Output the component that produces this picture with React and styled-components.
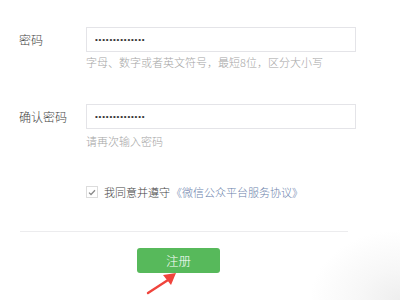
import React from "react";
import styled, { createGlobalStyle } from "styled-components";

const Global = createGlobalStyle`
  html, body { margin: 0; padding: 0; }
  body {
    width: 400px;
    height: 300px;
    overflow: hidden;
    background: radial-gradient(ellipse 90px 70px at 400px 300px, #eeeeee 0%, #f7f7f7 45%, #ffffff 100%);
    font-family: "Liberation Sans", "Noto Sans CJK SC", sans-serif;
  }
`;

const Page = styled.div`
  position: relative;
  width: 400px;
  height: 300px;
  box-sizing: border-box;
  padding: 27px 0 0 19px;
`;

const Field = styled.div`
  display: grid;
  grid-template-columns: 67px 270px;
  margin-top: ${(p) => p.$gap || 0}px;
`;

const Label = styled.label`
  align-self: center;
  font-size: 12px;
  font-weight: 300;
  color: #444;
  font-family: "Noto Sans CJK SC", sans-serif;
  line-height: 14px;
`;

const Input = styled.input`
  box-sizing: border-box;
  width: 270px;
  height: 25px;
  margin: 0;
  padding: 0 8px;
  border: 1px solid #e4e4e8;
  background: #fff;
  outline: none;
  font-family: "Liberation Sans", sans-serif;
  font-size: 8px;
  letter-spacing: 0.8px;
  color: #333;
`;

const Hint = styled.div`
  grid-column: 2;
  margin-top: ${(p) => p.$top || 3}px;
  font-size: 11px;
  font-weight: 300;
  line-height: 14px;
  color: #a5a5a5;
  font-family: "Noto Sans CJK SC", sans-serif;
`;

const Agree = styled.div`
  display: flex;
  align-items: center;
  margin: 37px 0 0 67px;
  font-size: 11px;
  font-weight: 300;
  line-height: 14px;
  font-family: "Noto Sans CJK SC", sans-serif;
  color: #444;
`;

const Box = styled.span`
  display: inline-flex;
  align-items: center;
  justify-content: center;
  box-sizing: border-box;
  width: 12px;
  height: 12px;
  border: 1px solid #dcdcdc;
  background: #fff;
  margin-right: 6px;
`;

const Link = styled.a`
  color: #6b82ab;
  text-decoration: none;
  margin-left: 1px;
`;

const Divider = styled.hr`
  width: 328px;
  margin: 32px 0 0 1px;
  border: 0;
  border-top: 1px solid #ececee;
`;

const Button = styled.button`
  display: block;
  width: 83px;
  height: 25px;
  margin: 16px 0 0 118px;
  padding: 0;
  border: 0;
  border-radius: 3px;
  background: #57b95b;
  color: #fff;
  font-size: 12.5px;
  font-weight: 300;
  font-family: "Noto Sans CJK SC", sans-serif;
  cursor: pointer;
`;

const Arrow = styled.svg`
  position: absolute;
  left: 144px;
  top: 270px;
`;

export default function App() {
  return (
    <>
      <Global />
      <Page>
        <Field>
          <Label>密码</Label>
          <Input type="password" readOnly value="12345678901234" />
          <Hint>字母、数字或者英文符号，最短8位，区分大小写</Hint>
        </Field>
        <Field $gap={35}>
          <Label>确认密码</Label>
          <Input type="password" readOnly value="12345678901234" />
          <Hint $top={5}>请再次输入密码</Hint>
        </Field>
        <Agree>
          <Box>
            <svg width="8" height="7" viewBox="0 0 8 7">
              <path d="M1 3.6 L3 5.5 L7 1.2" fill="none" stroke="#8a8a8a" strokeWidth="1.3" />
            </svg>
          </Box>
          我同意并遵守
          <Link href="#">《微信公众平台服务协议》</Link>
        </Agree>
        <Divider />
        <Button>注册</Button>
        <Arrow width="40" height="30" viewBox="0 0 40 30">
          <path d="M4 23 L24 10" stroke="#f0443c" strokeWidth="2.4" strokeLinecap="round" />
          <path d="M32 3 L19 5 L27 15 Z" fill="#f0443c" />
        </Arrow>
      </Page>
    </>
  );
}
